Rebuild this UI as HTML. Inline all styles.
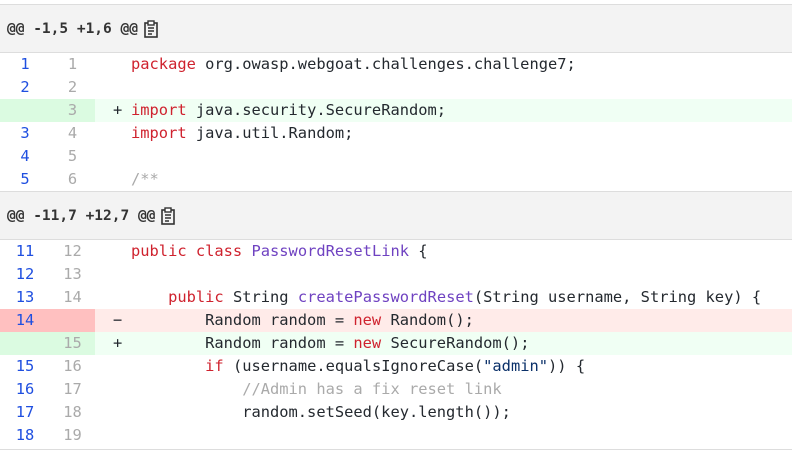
<!DOCTYPE html>
<html><head><style>
body{margin:0;background:#fff;width:792px;height:460px;overflow:hidden;font-family:"DejaVu Sans Mono","Liberation Mono",monospace;}
.top{height:4px;border-bottom:1px solid #ddd;background:#fff}
.hdr{height:48px;background:#f3f3f3;border-bottom:1px solid #ddd;display:flex;align-items:center;padding-left:7px;font-size:14.5px;font-weight:bold;color:#333;box-sizing:border-box}
.hdr svg{margin-left:6px}
.row{height:23px;line-height:23px;font-size:15.4px;display:flex;white-space:pre;color:#24292f}
.o{width:50px;text-align:center;color:#1f4fe0;flex:none}
.n{width:45px;text-align:center;color:#aaa;flex:none;padding-right:0}
.s{width:36px;padding-left:18px;box-sizing:border-box;flex:none}
.add .o,.add .n{background:#dbfbe1}
.add{background:#f0fff4}
.del .o,.del .n{background:#ffc0c0}
.del{background:#ffebe9}
.k{color:#cf222e}.p{color:#6f42c1}.c{color:#aaa}.st{color:#0a3069}
.bot{border-top:1px solid #ddd;margin-top:2px}
</style></head><body>
<div class="top"></div>
<div class="hdr" style="height:48px">@@ -1,5 +1,6 @@<svg width="14" height="18" viewBox="0 0 14 18"><rect x="1" y="3" width="12" height="14" fill="none" stroke="#333" stroke-width="1.6"/><rect x="4" y="1" width="6" height="4" fill="#fff" stroke="#333" stroke-width="1.4"/><path d="M4 8h6M4 11h6M4 14h4" stroke="#333" stroke-width="1.4"/></svg></div>
<div class="row"><span class="o">1</span><span class="n">1</span><span class="s"> </span><span><span class="k">package</span> org.owasp.webgoat.challenges.challenge7;</span></div>
<div class="row"><span class="o">2</span><span class="n">2</span><span class="s"> </span><span></span></div>
<div class="row add"><span class="o"></span><span class="n">3</span><span class="s">+</span><span><span class="k">import</span> java.security.SecureRandom;</span></div>
<div class="row"><span class="o">3</span><span class="n">4</span><span class="s"> </span><span><span class="k">import</span> java.util.Random;</span></div>
<div class="row"><span class="o">4</span><span class="n">5</span><span class="s"> </span><span></span></div>
<div class="row"><span class="o">5</span><span class="n">6</span><span class="s"> </span><span class="c">/**</span></div>
<div class="hdr" style="border-top:1px solid #ddd;height:49px">@@ -11,7 +12,7 @@<svg width="14" height="18" viewBox="0 0 14 18"><rect x="1" y="3" width="12" height="14" fill="none" stroke="#333" stroke-width="1.6"/><rect x="4" y="1" width="6" height="4" fill="#fff" stroke="#333" stroke-width="1.4"/><path d="M4 8h6M4 11h6M4 14h4" stroke="#333" stroke-width="1.4"/></svg></div>
<div class="row"><span class="o">11</span><span class="n">12</span><span class="s"> </span><span><span class="k">public class</span> <span class="p">PasswordResetLink</span> {</span></div>
<div class="row"><span class="o">12</span><span class="n">13</span><span class="s"> </span><span></span></div>
<div class="row"><span class="o">13</span><span class="n">14</span><span class="s"> </span><span>    <span class="k">public</span> String <span class="p">createPasswordReset</span>(String username, String key) {</span></div>
<div class="row del"><span class="o">14</span><span class="n"></span><span class="s">−</span><span>        Random random = <span class="k">new</span> Random();</span></div>
<div class="row add"><span class="o"></span><span class="n">15</span><span class="s">+</span><span>        Random random = <span class="k">new</span> SecureRandom();</span></div>
<div class="row"><span class="o">15</span><span class="n">16</span><span class="s"> </span><span>        <span class="k">if</span> (username.equalsIgnoreCase(<span class="st">"admin"</span>)) {</span></div>
<div class="row"><span class="o">16</span><span class="n">17</span><span class="s"> </span><span class="c">            //Admin has a fix reset link</span></div>
<div class="row"><span class="o">17</span><span class="n">18</span><span class="s"> </span><span>            random.setSeed(key.length());</span></div>
<div class="row"><span class="o">18</span><span class="n">19</span><span class="s"> </span><span></span></div>
<div class="bot"></div>
</body></html>
